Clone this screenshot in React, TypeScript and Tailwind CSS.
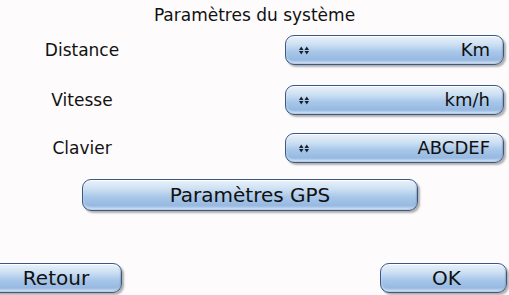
import React from "react";

const btn =
  "rounded-[9px] border border-[#3a5883] bg-[linear-gradient(to_bottom,#eaf2fa_0%,#cde0f3_30%,#a7c6e8_58%,#97b9e2_85%,#bcd5f0_100%)] shadow-[inset_0_1px_0_rgba(255,255,255,0.9),inset_0_-2px_2px_rgba(255,255,255,0.45),inset_-1px_-1px_1px_rgba(40,70,120,0.35),2px_2px_2px_rgba(0,0,0,0.3)]";

function Arrows() {
  return (
    <svg width="10" height="9" viewBox="0 0 10 9" className="block">
      <polygon points="0,4 2.25,0.5 4.5,4" fill="#15202e" />
      <polygon points="0,5 2.25,8.5 4.5,5" fill="#15202e" />
      <polygon points="5.5,4 7.75,0.5 10,4" fill="#15202e" />
      <polygon points="5.5,5 7.75,8.5 10,5" fill="#15202e" />
    </svg>
  );
}

function Row({ label, value, mt }: { label: string; value: string; mt: string }) {
  return (
    <div className={`flex h-[30px] items-center ${mt}`}>
      <div className="w-[164px] text-center text-[17px] leading-none">{label}</div>
      <div className={`ml-auto mr-[5px] flex h-[30px] w-[219px] items-center pl-[13px] pr-[13px] ${btn}`}>
        <Arrows />
        <span className="ml-auto text-[18px] leading-none">{value}</span>
      </div>
    </div>
  );
}

export default function App() {
  return (
    <div
      className="relative h-[295px] w-[509px] overflow-hidden bg-[#fdfbfc] text-[#111]"
      style={{ fontFamily: '"DejaVu Sans", sans-serif' }}
    >
      <div className="flex h-[30px] items-center justify-center text-[17px] leading-none">
        Paramètres du système
      </div>
      <Row label="Distance" value="Km" mt="mt-[5px]" />
      <Row label="Vitesse" value="km/h" mt="mt-[20px]" />
      <Row label="Clavier" value="ABCDEF" mt="mt-[18px]" />
      <div className="mt-[16px] flex">
        <div className={`ml-[82px] flex h-[32px] w-[336px] items-center justify-center text-[20px] leading-none ${btn}`}>
          Paramètres GPS
        </div>
      </div>
      <div className="mt-[52px] flex">
        <div className={`ml-[-10px] flex h-[30px] w-[132px] items-center justify-center text-[20px] leading-none ${btn}`}>
          Retour
        </div>
        <div className={`ml-auto mr-[2px] flex h-[30px] w-[127px] items-center justify-center pl-[6px] text-[20px] leading-none ${btn}`}>
          OK
        </div>
      </div>
    </div>
  );
}
